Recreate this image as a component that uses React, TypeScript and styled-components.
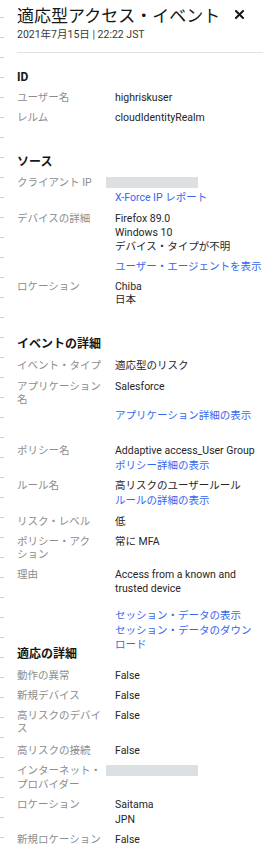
import styled, { createGlobalStyle } from "styled-components";

const GlobalStyle = createGlobalStyle`
  html, body {
    margin: 0;
    padding: 0;
    background: #ffffff;
  }
  body {
    font-family: Roboto, "Noto Sans CJK JP", sans-serif;
    color: #161616;
    -webkit-font-smoothing: antialiased;
  }
`;

const Page = styled.div`
  display: flex;
  width: 275px;
  min-height: 849px;
`;

// faint row lines of the page behind the flyout
const Gutter = styled.div`
  flex: 0 0 4px;
  background: repeating-linear-gradient(
    to bottom,
    transparent 0 17px,
    #cfcfcf 17px 18px,
    transparent 18px 20px
  );
`;

const Panel = styled.div`
  flex: 1;
  padding: 5px 12px 0 13px;
  font-size: 10.5px;
  line-height: 13.5px;
  line-break: strict;
`;

const TitleRow = styled.div`
  display: flex;
  align-items: center;
  gap: 14px;
`;

const Title = styled.h1`
  margin: 0;
  font-size: 17px;
  line-height: 22px;
  font-weight: 400;
  color: #161616;
`;

const CloseButton = styled.button`
  display: flex;
  align-items: center;
  justify-content: center;
  padding: 0;
  margin-top: -3px;
  border: 0;
  background: none;
  width: 10px;
  height: 10px;
  cursor: pointer;
`;

const DateText = styled.div`
  margin-top: 1px;
  color: #393939;
  font-size: 10.5px;
`;

const Divider = styled.hr`
  margin: 10px 0 0;
  border: 0;
  border-top: 1px solid #e0e0e0;
`;

const Section = styled.section<{ $first?: boolean; $gap?: number }>`
  margin-top: ${(p) => (p.$first ? 16 : p.$gap ?? 25.5)}px;
`;

const SectionTitle = styled.h2`
  margin: 0 0 3.5px;
  font-size: 12px;
  line-height: 16px;
  font-weight: 700;
  color: #161616;
`;

const Row = styled.div<{ $after?: number }>`
  display: grid;
  grid-template-columns: 90px 1fr;
  column-gap: 8px;
  padding: 3.25px 0;
  margin-bottom: ${(p) => p.$after ?? 0}px;
`;

const Label = styled.div`
  color: #8d8d8d;
`;

const Value = styled.div`
  display: flex;
  flex-direction: column;
  align-items: flex-start;
  color: #262626;
  min-width: 0;
`;

const Line = styled.div<{ $gap?: number }>`
  margin-top: ${(p) => p.$gap ?? 0}px;
`;

const Link = styled.a<{ $gap?: number }>`
  margin-top: ${(p) => p.$gap ?? 1.5}px;
  color: #3567f0;
  text-decoration: none;
`;

const NoBreak = styled.span`
  white-space: nowrap;
`;

const Skeleton = styled.div`
  width: 92px;
  height: 11px;
  margin: 1px 0 1.5px -9px;
  background: #dde0e3;
`;

// the session links run past the row, as in the product
const OverflowLinks = styled.div`
  display: flex;
  flex-direction: column;
  align-items: flex-start;
  margin-top: 14px;
  height: 8px;
  overflow: visible;
`;

function CloseIcon() {
  return (
    <svg width="9" height="9" viewBox="0 0 9 9">
      <path d="M1 1 L8 8 M8 1 L1 8" stroke="#161616" strokeWidth="2" strokeLinecap="square" />
    </svg>
  );
}

export default function App() {
  return (
    <Page lang="ja">
      <GlobalStyle />
      <Gutter />
      <Panel>
        <TitleRow>
          <Title>適応型アクセス・イベント</Title>
          <CloseButton aria-label="閉じる">
            <CloseIcon />
          </CloseButton>
        </TitleRow>
        <DateText>2021年7月15日 | 22:22 JST</DateText>
        <Divider />

        <Section $first>
          <SectionTitle>ID</SectionTitle>
          <Row>
            <Label>ユーザー名</Label>
            <Value>highriskuser</Value>
          </Row>
          <Row>
            <Label>レルム</Label>
            <Value>cloudIdentityRealm</Value>
          </Row>
        </Section>

        <Section>
          <SectionTitle>ソース</SectionTitle>
          <Row $after={1}>
            <Label>クライアント IP</Label>
            <Value>
              <Skeleton />
              <Link href="#">X-Force IP レポート</Link>
            </Value>
          </Row>
          <Row>
            <Label>デバイスの詳細</Label>
            <Value>
              <Line>Firefox 89.0</Line>
              <Line>Windows 10</Line>
              <Line $gap={0.5}>デバイス・タイプが不明</Line>
              <Link href="#" $gap={6.5}>
                ユーザー・エージェントを表示
              </Link>
            </Value>
          </Row>
          <Row>
            <Label>ロケーション</Label>
            <Value>
              <Line>Chiba</Line>
              <Line>日本</Line>
            </Value>
          </Row>
        </Section>

        <Section $gap={26}>
          <SectionTitle>イベントの詳細</SectionTitle>
          <Row $after={1}>
            <Label>イベント・タイプ</Label>
            <Value>適応型のリスク</Value>
          </Row>
          <Row $after={15}>
            <Label>アプリケーション名</Label>
            <Value>
              <Line>Salesforce</Line>
              <Link href="#" $gap={15.5}>
                アプリケーション詳細の表示
              </Link>
            </Value>
          </Row>
          <Row>
            <Label>ポリシー名</Label>
            <Value>
              <Line>Addaptive access_User Group</Line>
              <Link href="#">ポリシー詳細の表示</Link>
            </Value>
          </Row>
          <Row $after={1}>
            <Label>ルール名</Label>
            <Value>
              <Line>高リスクのユーザールール</Line>
              <Link href="#">ルールの詳細の表示</Link>
            </Value>
          </Row>
          <Row>
            <Label>リスク・レベル</Label>
            <Value>低</Value>
          </Row>
          <Row>
            <Label>ポリシー・アクション</Label>
            <Value>常に MFA</Value>
          </Row>
          <Row>
            <Label>理由</Label>
            <Value>
              <Line>Access from a known and trusted device</Line>
              <OverflowLinks>
                <Link href="#" $gap={0}>
                  セッション・データの表示
                </Link>
                <Link href="#">
                  セッション・データのダウン<NoBreak>ロード</NoBreak>
                </Link>
              </OverflowLinks>
            </Value>
          </Row>
        </Section>

        <Section>
          <SectionTitle>適応の詳細</SectionTitle>
          <Row>
            <Label>動作の異常</Label>
            <Value>False</Value>
          </Row>
          <Row>
            <Label>新規デバイス</Label>
            <Value>False</Value>
          </Row>
          <Row $after={2}>
            <Label>高リスクのデバイス</Label>
            <Value>False</Value>
          </Row>
          <Row>
            <Label>高リスクの接続</Label>
            <Value>False</Value>
          </Row>
          <Row>
            <Label>インターネット・プロバイダー</Label>
            <Value>
              <Skeleton />
            </Value>
          </Row>
          <Row>
            <Label>ロケーション</Label>
            <Value>
              <Line>Saitama</Line>
              <Line $gap={1.5}>JPN</Line>
            </Value>
          </Row>
          <Row>
            <Label>新規ロケーション</Label>
            <Value>False</Value>
          </Row>
        </Section>
      </Panel>
    </Page>
  );
}
